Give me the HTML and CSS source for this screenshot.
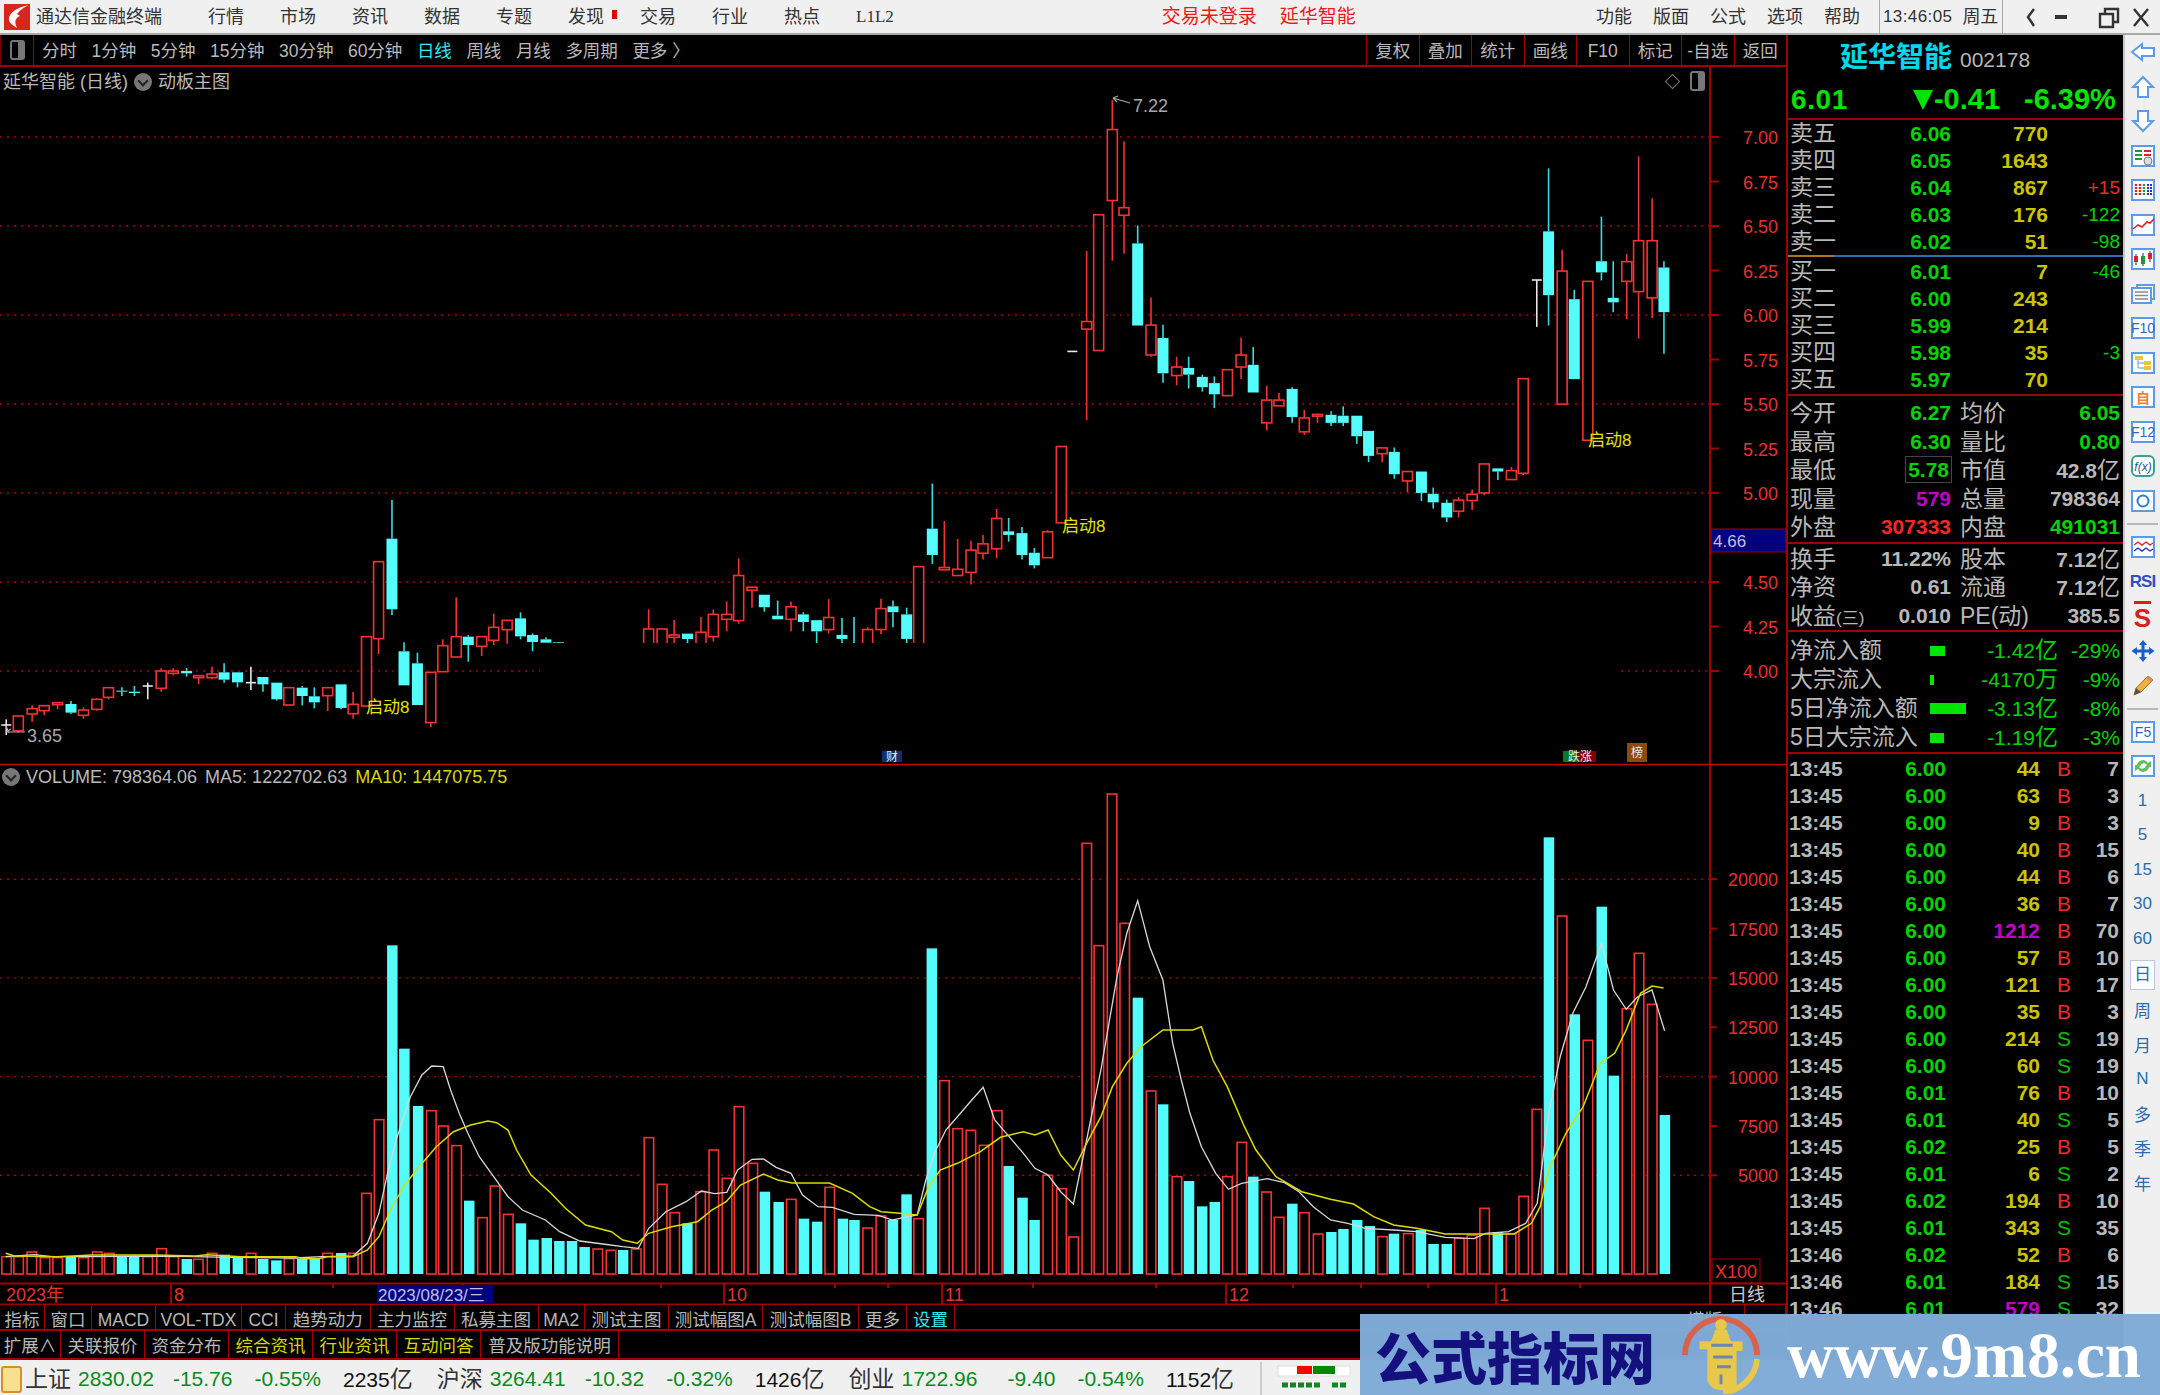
FILE: index.html
```html
<!DOCTYPE html>
<html lang="zh-CN">
<head>
    <meta charset="UTF-8">
    <title>通达信金融终端</title>
    <link rel="stylesheet" href="styles.css">
</head>
<body>
    <div class="titlebar">
        <svg class="logo" viewBox="0 0 26 26"><rect width="26" height="26" fill="#d9261c"/><path d="M25 1 C14 3 6 8 5 14 C4 19 9 21 13 24 C10 18 11 14 16 12 L13 10 C16 6 20 3 25 1Z" fill="#fff"/></svg>
        <span class="app-name">通达信金融终端</span>
        <nav class="menu menu-left">
            <span>行情</span><span>市场</span><span>资讯</span><span>数据</span><span>专题</span>
            <span class="has-dot">发现</span><span>交易</span><span>行业</span><span>热点</span><span class="l1l2">L1L2</span>
        </nav>
        <span class="alert alert-first">交易未登录</span>
        <span class="alert alert-second">延华智能</span>
        <nav class="menu menu-right">
            <span>功能</span><span>版面</span><span>公式</span><span>选项</span><span>帮助</span>
        </nav>
        <div class="clock"><span class="clock-time">13:46:05</span><span>周五</span></div>
        <div class="winctl">
            <svg viewBox="0 0 157 34"><path d="M31 9 L25 17 L31 26" class="wc"/><path d="M52 17 H64" class="wc wc-fat"/><path d="M97 14 H110 V27 H97 Z M102 14 V9 H115 V22 H110" class="wc"/><path d="M131 9 L145 26 M145 9 L131 26" class="wc"/></svg>
        </div>
    </div>

    <div class="workspace">
        <main class="main">
            <div class="periodbar">
                <div class="period-icon"><i></i></div>
                <div class="periods">
                    <span>分时</span><span>1分钟</span><span>5分钟</span><span>15分钟</span><span>30分钟</span><span>60分钟</span>
                    <span class="on">日线</span><span>周线</span><span>月线</span><span>多周期</span><span>更多 〉</span>
                </div>
                <div class="tools">
                    <span>复权</span><span>叠加</span><span>统计</span><span>画线</span><span>F10</span><span>标记</span><span>-自选</span><span>返回</span>
                </div>
            </div>

            <div class="charts">
                <svg id="chart" class="chart" viewBox="0 67 1786 1238"></svg>
                <div class="chart-title">
                    <span>延华智能 (日线)</span><i class="round-btn"></i><span>动板主图</span>
                </div>
                <div class="chart-corner"><i class="diamond"></i><i class="mini-box"></i></div>
                <div class="vol-title">
                    <i class="round-btn"></i><span>VOLUME: 798364.06</span><span>MA5: 1222702.63</span><span class="yel">MA10: 1447075.75</span>
                </div>
            </div>

            <div class="btnrow btnrow-a">
                <span>指标</span><span>窗口</span><span>MACD</span><span>VOL-TDX</span><span>CCI</span><span>趋势动力</span><span>主力监控</span><span>私募主图</span><span>MA2</span><span>测试主图</span><span>测试幅图A</span><span>测试幅图B</span><span>更多</span><span class="cy">设置</span><b></b><span>模版</span><span></span>
            </div>
            <div class="btnrow btnrow-b">
                <span>扩展∧</span><span>关联报价</span><span>资金分布</span><span class="yel">综合资讯</span><span class="yel">行业资讯</span><span class="yel">互动问答</span><span>普及版功能说明</span>
            </div>
        </main>

        <aside class="quote">
            <div class="stock-head"><span class="stock-name">延华智能</span><span class="stock-code">002178</span></div>
            <div class="price-line">
                <span class="last">6.01</span>
                <span class="chg"><i class="tri"></i>-0.41</span>
                <span class="pct">-6.39%</span>
            </div>

            <div class="book">
                <div class="row"><span>卖五</span><b class="g">6.06</b><b class="y">770</b><em></em></div>
                <div class="row"><span>卖四</span><b class="g">6.05</b><b class="y">1643</b><em></em></div>
                <div class="row"><span>卖三</span><b class="g">6.04</b><b class="y">867</b><em class="r">+15</em></div>
                <div class="row"><span>卖二</span><b class="g">6.03</b><b class="y">176</b><em class="g">-122</em></div>
                <div class="row"><span>卖一</span><b class="g">6.02</b><b class="y">51</b><em class="g">-98</em></div>
            </div>
            <div class="book-split"></div>
            <div class="book">
                <div class="row"><span>买一</span><b class="g">6.01</b><b class="y">7</b><em class="g">-46</em></div>
                <div class="row"><span>买二</span><b class="g">6.00</b><b class="y">243</b><em></em></div>
                <div class="row"><span>买三</span><b class="g">5.99</b><b class="y">214</b><em></em></div>
                <div class="row"><span>买四</span><b class="g">5.98</b><b class="y">35</b><em class="g">-3</em></div>
                <div class="row"><span>买五</span><b class="g">5.97</b><b class="y">70</b><em></em></div>
            </div>

            <div class="info info-top">
                <div class="irow"><span>今开</span><b class="g">6.27</b><span>均价</span><b class="g">6.05</b></div>
                <div class="irow"><span>最高</span><b class="g">6.30</b><span>量比</span><b class="g">0.80</b></div>
                <div class="irow"><span>最低</span><b class="g"><u>5.78</u></b><span>市值</span><b>42.8<small>亿</small></b></div>
                <div class="irow"><span>现量</span><b class="m">579</b><span>总量</span><b>798364</b></div>
                <div class="irow"><span>外盘</span><b class="r">307333</b><span>内盘</span><b class="g">491031</b></div>
            </div>
            <div class="info">
                <div class="irow"><span>换手</span><b>11.22%</b><span>股本</span><b>7.12<small>亿</small></b></div>
                <div class="irow"><span>净资</span><b>0.61</b><span>流通</span><b>7.12<small>亿</small></b></div>
                <div class="irow"><span>收益<small>(三)</small></span><b>0.010</b><span>PE(动)</span><b>385.5</b></div>
            </div>
            <div class="flows">
                <div class="frow"><span>净流入额</span><i class="fbar fbar-a"></i><em>-1.42<small>亿</small></em><em>-29%</em></div>
                <div class="frow"><span>大宗流入</span><i class="fbar fbar-b"></i><em>-4170<small>万</small></em><em>-9%</em></div>
                <div class="frow"><span>5日净流入额</span><i class="fbar fbar-c"></i><em>-3.13<small>亿</small></em><em>-8%</em></div>
                <div class="frow"><span>5日大宗流入</span><i class="fbar fbar-d"></i><em>-1.19<small>亿</small></em><em>-3%</em></div>
            </div>

            <div class="ticks">
                <div class="tick"><span>13:45</span><b class="g">6.00</b><b class="y">44</b><b class="r">B</b><span class="n">7</span></div>
                <div class="tick"><span>13:45</span><b class="g">6.00</b><b class="y">63</b><b class="r">B</b><span class="n">3</span></div>
                <div class="tick"><span>13:45</span><b class="g">6.00</b><b class="y">9</b><b class="r">B</b><span class="n">3</span></div>
                <div class="tick"><span>13:45</span><b class="g">6.00</b><b class="y">40</b><b class="r">B</b><span class="n">15</span></div>
                <div class="tick"><span>13:45</span><b class="g">6.00</b><b class="y">44</b><b class="r">B</b><span class="n">6</span></div>
                <div class="tick"><span>13:45</span><b class="g">6.00</b><b class="y">36</b><b class="r">B</b><span class="n">7</span></div>
                <div class="tick"><span>13:45</span><b class="g">6.00</b><b class="m">1212</b><b class="r">B</b><span class="n">70</span></div>
                <div class="tick"><span>13:45</span><b class="g">6.00</b><b class="y">57</b><b class="r">B</b><span class="n">10</span></div>
                <div class="tick"><span>13:45</span><b class="g">6.00</b><b class="y">121</b><b class="r">B</b><span class="n">17</span></div>
                <div class="tick"><span>13:45</span><b class="g">6.00</b><b class="y">35</b><b class="r">B</b><span class="n">3</span></div>
                <div class="tick"><span>13:45</span><b class="g">6.00</b><b class="y">214</b><b class="gs">S</b><span class="n">19</span></div>
                <div class="tick"><span>13:45</span><b class="g">6.00</b><b class="y">60</b><b class="gs">S</b><span class="n">19</span></div>
                <div class="tick"><span>13:45</span><b class="g">6.01</b><b class="y">76</b><b class="r">B</b><span class="n">10</span></div>
                <div class="tick"><span>13:45</span><b class="g">6.01</b><b class="y">40</b><b class="gs">S</b><span class="n">5</span></div>
                <div class="tick"><span>13:45</span><b class="g">6.02</b><b class="y">25</b><b class="r">B</b><span class="n">5</span></div>
                <div class="tick"><span>13:45</span><b class="g">6.01</b><b class="y">6</b><b class="gs">S</b><span class="n">2</span></div>
                <div class="tick"><span>13:45</span><b class="g">6.02</b><b class="y">194</b><b class="r">B</b><span class="n">10</span></div>
                <div class="tick"><span>13:45</span><b class="g">6.01</b><b class="y">343</b><b class="gs">S</b><span class="n">35</span></div>
                <div class="tick"><span>13:46</span><b class="g">6.02</b><b class="y">52</b><b class="r">B</b><span class="n">6</span></div>
                <div class="tick"><span>13:46</span><b class="g">6.01</b><b class="y">184</b><b class="gs">S</b><span class="n">15</span></div>
                <div class="tick"><span>13:46</span><b class="g">6.01</b><b class="m">579</b><b class="gs">S</b><span class="n">32</span></div>
            </div>
        </aside>

        <aside class="side">
            <div class="sbtn"><svg viewBox="0 0 26 24"><path class="arw" d="M2 12 L12 4 V8 H24 V16 H12 V20 Z"/></svg></div>
            <div class="sbtn"><svg viewBox="0 0 26 24"><path class="arw" d="M13 2 L23 12 H18 V22 H8 V12 H3 Z"/></svg></div>
            <div class="sbtn"><svg viewBox="0 0 26 24"><path class="arw" d="M13 22 L23 12 H18 V2 H8 V12 H3 Z"/></svg></div>
            <div class="sbtn"><svg viewBox="0 0 26 24"><rect class="ibox" x="2" y="2" width="22" height="20"/><path d="M5 7 H12 M5 11 H12 M5 15 H12" stroke="#1a9a3a" stroke-width="2"/><path d="M14 7 H21 M14 11 H21" stroke="#e02020" stroke-width="2"/><circle cx="18" cy="17" r="4" fill="#ddd" stroke="#777"/></svg></div>
            <div class="sbtn"><svg viewBox="0 0 26 24"><rect class="ibox" x="2" y="2" width="22" height="20"/><path d="M6 6 V18 M10 6 V18" stroke="#e02020" stroke-width="2.4" stroke-dasharray="2 1"/><path d="M14 6 V18" stroke="#1a9a3a" stroke-width="2.4" stroke-dasharray="2 1"/><path d="M18 6 V18 M21 6 V18" stroke="#2030d0" stroke-width="2" stroke-dasharray="2 1"/></svg></div>
            <div class="sbtn"><svg viewBox="0 0 26 24"><rect class="ibox" x="2" y="2" width="22" height="20"/><path d="M3 16 L8 12 L12 14 L17 9 L20 10 L24 6" fill="none" stroke="#e02020" stroke-width="1.6"/></svg></div>
            <div class="sbtn"><svg viewBox="0 0 26 24"><rect class="ibox" x="2" y="2" width="22" height="20"/><path d="M6 7 V18 M13 6 V19 M20 4 V15" stroke="#333" stroke-width="1"/><rect x="4" y="9" width="4" height="6" fill="#e02020"/><rect x="11" y="9" width="4" height="8" fill="#1a9a3a"/><rect x="18" y="6" width="4" height="6" fill="#e02020"/></svg></div>
            <div class="sbtn"><svg viewBox="0 0 26 24"><rect class="ibox" x="7" y="3" width="17" height="14"/><rect class="ibox" x="2" y="6" width="19" height="15"/><path d="M5 10 H18 M5 13.5 H18 M5 17 H18" stroke="#888" stroke-width="1.6"/></svg></div>
            <div class="sbtn"><svg viewBox="0 0 26 24"><rect class="ibox" x="2" y="2" width="22" height="20"/><text class="itxt" x="13" y="17" text-anchor="middle">F10</text></svg></div>
            <div class="sbtn"><svg viewBox="0 0 26 24"><rect class="ibox" x="2" y="2" width="22" height="20"/><path d="M8 7 V17 H15 M8 12 H15" fill="none" stroke="#5b9bea"/><rect x="5" y="5" width="8" height="4" fill="#f0c040"/><rect x="14" y="10" width="7" height="4" fill="#f0c040"/><rect x="14" y="15" width="7" height="4" fill="#f0c040"/></svg></div>
            <div class="sbtn"><svg viewBox="0 0 26 24"><rect class="ibox" x="2" y="2" width="22" height="20"/><text class="itxt itxt-or" x="13" y="18" text-anchor="middle">自</text></svg></div>
            <div class="sbtn"><svg viewBox="0 0 26 24"><rect class="ibox" x="2" y="2" width="22" height="20"/><text class="itxt" x="13" y="17" text-anchor="middle">F12</text></svg></div>
            <div class="sbtn"><svg viewBox="0 0 26 24"><rect class="ibox ibox-teal" x="2" y="2" width="22" height="20" rx="5"/><text class="itxt itxt-fx" x="13" y="17" text-anchor="middle">f(x)</text></svg></div>
            <div class="sbtn"><svg viewBox="0 0 26 24"><rect class="ibox" x="2" y="2" width="22" height="20"/><circle cx="13" cy="12" r="5.5" fill="none" stroke="#2a80d0" stroke-width="2"/></svg></div>
            <div class="ssep"></div>
            <div class="sbtn"><svg viewBox="0 0 26 24"><rect class="ibox" x="2" y="2" width="22" height="20"/><path d="M4 10 L8 7 L12 10 L16 7 L20 10 L23 8" fill="none" stroke="#e02020" stroke-width="1.4"/><path d="M4 16 L8 13 L12 16 L16 13 L20 16 L23 14" fill="none" stroke="#2030d0" stroke-width="1.4"/></svg></div>
            <div class="sbtn"><span class="rsi">RSI</span></div>
            <div class="sbtn"><span class="dollar">S</span></div>
            <div class="sbtn"><svg viewBox="0 0 26 24"><path d="M13 1 L17 6 H14.5 V10.5 H19 V8 L24.5 12 L19 16 V13.5 H14.5 V18 H17 L13 23 L9 18 H11.5 V13.5 H7 V16 L1.5 12 L7 8 V10.5 H11.5 V6 H9 Z" fill="#1a5ec8"/></svg></div>
            <div class="sbtn"><svg viewBox="0 0 26 24"><path d="M4 22 L6 15 L18 3 L23 7 L11 19 Z" fill="#f0b040" stroke="#a87020"/><path d="M18 3 L23 7 L21 9 L16 5 Z" fill="#e88080"/><path d="M4 22 L6 15 L11 19 Z" fill="#555"/></svg></div>
            <div class="ssep"></div>
            <div class="sbtn"><svg viewBox="0 0 26 24"><rect class="ibox" x="2" y="2" width="22" height="20"/><text class="itxt" x="13" y="17" text-anchor="middle">F5</text></svg></div>
            <div class="sbtn"><svg viewBox="0 0 26 24"><rect class="ibox" x="2" y="2" width="22" height="20"/><path d="M7 11 A6 6 0 0 1 18 9 L21 7 V13 H15 L17 11 A4 4 0 0 0 10 12 Z M19 13 A6 6 0 0 1 8 15 L5 17 V11 H11 L9 13 A4 4 0 0 0 16 12 Z" fill="#60c060"/></svg></div>
            <div class="sbtn sbtn-txt">1</div>
            <div class="sbtn sbtn-txt">5</div>
            <div class="sbtn sbtn-txt">15</div>
            <div class="sbtn sbtn-txt">30</div>
            <div class="sbtn sbtn-txt">60</div>
            <div class="sbtn sbtn-txt sbtn-first sbtn-on"><span>日</span></div>
            <div class="sbtn sbtn-txt">周</div>
            <div class="sbtn sbtn-txt">月</div>
            <div class="sbtn sbtn-txt">N</div>
            <div class="sbtn sbtn-txt">多</div>
            <div class="sbtn sbtn-txt">季</div>
            <div class="sbtn sbtn-txt">年</div>
        </aside>
    </div>

    <footer class="statusbar">
        <i class="status-icon"></i>
        <div class="idx"><span class="nm">上证</span><span class="v">2830.02</span><span class="c">-15.76</span><span class="p">-0.55%</span><span class="a">2235<small>亿</small></span></div>
        <div class="idx"><span class="nm">沪深</span><span class="v">3264.41</span><span class="c">-10.32</span><span class="p">-0.32%</span><span class="a">1426<small>亿</small></span></div>
        <div class="idx"><span class="nm">创业</span><span class="v">1722.96</span><span class="c">-9.40</span><span class="p">-0.54%</span><span class="a">1152<small>亿</small></span></div>
        <div class="status-led">
            <svg viewBox="0 0 100 30"><rect x="6" y="2" width="72" height="10" fill="#fff" stroke="#ddd"/><rect x="25" y="2" width="15" height="8" fill="#f00"/><rect x="41" y="2" width="22" height="8" fill="#080"/><path d="M10 21 H50 M60 21 H75" stroke="#0a8a20" stroke-width="5" stroke-dasharray="6 2"/></svg>
        </div>
    </footer>

    <div class="watermark">
        <span class="wm-cn">公式指标网</span>
        <svg class="wm-logo" viewBox="0 0 80 80">
            <path d="M3 40 A37 37 0 0 1 77 40" fill="none" stroke="#d8624c" stroke-width="6"/>
            <path d="M77 44 A37 37 0 0 1 42 78" fill="none" stroke="#e8c84a" stroke-width="6"/>
            <circle cx="40" cy="9" r="6" fill="#e8c84a"/>
            <path d="M34 14 H46 L50 26 H62 V36 H56 V76 H40 C32 76 28 72 26 66 V34 H18 V26 H30 Z" fill="#e8c84a"/>
            <path d="M30 30 H52 M32 42 H52 M36 52 H50 M40 60 V70" stroke="#6c86b0" stroke-width="3" fill="none"/>
        </svg>
        <span class="wm-url">www.9m8.cn</span>
    </div>

    <script src="chart.js"></script>
</body>
</html>
```
FILE: styles.css
```css
* {
    box-sizing: border-box;
}
html, body {
    margin: 0;
    padding: 0;
}
body {
    position: relative;
    width: 2160px;
    height: 1395px;
    overflow: hidden;
    background: #000;
    color: #b8b8b8;
    font-family: "Liberation Sans", "Noto Sans CJK SC", sans-serif;
    font-size: 18px;
}
i, em, u {
    font-style: normal;
    text-decoration: none;
}

/* title bar */
.titlebar {
    display: flex;
    align-items: center;
    height: 35px;
    background: #f0f0f0;
    border-bottom: 2px solid #a8a8a8;
    color: #333;
    line-height: 30px;
}
.logo {
    width: 26px;
    height: 26px;
    margin-left: 4px;
}
.app-name {
    margin-left: 6px;
    width: 126px;
    white-space: nowrap;
}
.menu {
    display: flex;
}
.menu-left {
    margin-left: 46px;
    gap: 36px;
}
.menu-right {
    margin-left: auto;
    gap: 21px;
}
.has-dot {
    position: relative;
}
.has-dot::after {
    content: "";
    position: absolute;
    left: 44px;
    top: 8px;
    width: 5px;
    height: 9px;
    background: #e00000;
}
.l1l2 {
    font-family: "Liberation Serif", serif;
    font-size: 17px;
}
.alert {
    color: #f01818;
    font-size: 19px;
}
.alert-first {
    margin-left: 268px;
}
.alert-second {
    margin-left: 23px;
}
.clock {
    display: flex;
    align-items: center;
    gap: 10px;
    width: 124px;
    height: 33px;
    margin-left: 19px;
    padding-left: 3px;
    border-left: 1px solid #aaa;
    border-right: 1px solid #aaa;
}
.clock-time {
    font-size: 17px;
    letter-spacing: 0.4px;
    white-space: nowrap;
}
.winctl {
    width: 157px;
    height: 33px;
}
.winctl svg {
    display: block;
    width: 157px;
    height: 34px;
}
.wc {
    fill: none;
    stroke: #333;
    stroke-width: 2.4;
}
.wc-fat {
    stroke-width: 4;
}

/* workspace */
.workspace {
    display: flex;
    height: 1325px;
}
.main {
    display: flex;
    flex-direction: column;
    width: 1786px;
}
.periodbar {
    display: flex;
    height: 32px;
    border-bottom: 2px solid #a00000;
    border-left: 1px solid #800000;
    line-height: 32px;
}
.period-icon {
    display: flex;
    align-items: center;
    justify-content: center;
    width: 33px;
    border-right: 1px solid #a00000;
}
.period-icon i, .mini-box {
    display: block;
    width: 15px;
    height: 20px;
    border: 2px solid #777;
    border-radius: 3px;
    background: linear-gradient(to right, #000 55%, #777 55%);
}
.periods {
    display: flex;
    gap: 14.5px;
    margin-left: 8px;
    font-size: 17.5px;
}
.periods .on {
    color: #30e8f0;
}
.tools {
    display: grid;
    grid-template-columns: repeat(8, 52.5px);
    margin-left: auto;
    text-align: center;
    font-size: 17.5px;
}
.tools span {
    border-left: 1px solid #a00000;
    white-space: nowrap;
}
.charts {
    position: relative;
    height: 1238px;
}
.chart {
    display: block;
    width: 1786px;
    height: 1238px;
}
.chart-title, .vol-title {
    position: absolute;
    left: 3px;
    display: flex;
    align-items: center;
    white-space: nowrap;
    font-size: 18px;
    line-height: 24px;
}
.chart-title {
    top: 3px;
    gap: 6px;
}
.vol-title {
    left: 2px;
    top: 698px;
    gap: 8px;
}
.vol-title .round-btn {
    margin-right: -2px;
}
.round-btn {
    display: block;
    width: 18px;
    height: 18px;
    border-radius: 50%;
    background: #777;
    position: relative;
}
.round-btn::after {
    content: "";
    position: absolute;
    left: 5px;
    top: 4px;
    width: 6px;
    height: 6px;
    border-right: 2px solid #222;
    border-bottom: 2px solid #222;
    transform: rotate(45deg);
}
.chart-corner {
    position: absolute;
    right: 81px;
    top: 4px;
    display: flex;
    align-items: center;
    gap: 12px;
}
.diamond {
    display: block;
    width: 11px;
    height: 11px;
    border: 1px solid #777;
    transform: rotate(45deg);
}
.yel {
    color: #d8d800;
}
.cy {
    color: #30e8f0;
}
.btnrow {
    display: grid;
    border-bottom: 2px solid #a00000;
    text-align: center;
    font-size: 17.5px;
    white-space: nowrap;
    overflow: hidden;
}
.btnrow span {
    border-right: 1px solid #a00000;
    overflow: hidden;
}
.btnrow-a {
    grid-template-columns: 45px 47px 64px 86px 44px 84.5px 84px 84px 46.5px 84px 94px 96px 48px 48px 710px 80px 41px;
    height: 26px;
    line-height: 30px;
}
.btnrow-b {
    grid-template-columns: 61px 84px 84px 84px 84px 84px 138px;
    justify-content: start;
    height: 29px;
    line-height: 31px;
}

/* quote panel */
.quote {
    width: 337px;
    height: 1325px;
    overflow: hidden;
    border-left: 2px solid #a00000;
}
.stock-head {
    display: flex;
    align-items: center;
    height: 46px;
    padding-left: 52px;
    gap: 8px;
}
.stock-name {
    color: #00d8e8;
    font-size: 28px;
    font-weight: bold;
    line-height: 40px;
}
.stock-code {
    font-size: 21px;
    line-height: 40px;
    margin-top: 4px;
}
.price-line {
    display: flex;
    align-items: center;
    height: 39px;
    border-bottom: 2px solid #a00000;
    color: #00e400;
    font-size: 29px;
    font-weight: bold;
}
.last {
    margin-left: 3px;
    font-size: 28px;
    letter-spacing: 0.6px;
}
.chg {
    display: flex;
    align-items: center;
    margin-left: 65px;
}
.tri {
    display: block;
    width: 0;
    height: 0;
    margin-right: 1px;
    border-left: 10px solid transparent;
    border-right: 10px solid transparent;
    border-top: 20px solid #00e400;
}
.pct {
    margin-left: 24px;
}
.g {
    color: #00d400;
}
.y {
    color: #c8c400;
}
.r {
    color: #f02828;
}
.m {
    color: #c000c8;
}
.gs {
    color: #00c000;
}
.book .row {
    display: grid;
    grid-template-columns: 96px 65px 97px 72px;
    height: 27px;
    padding-left: 2px;
    line-height: 27px;
}
.row span, .irow span, .frow span {
    font-size: 23px;
    white-space: nowrap;
}
.row b, .row em, .irow b {
    text-align: right;
    font-size: 21px;
}
.row em {
    font-size: 19px;
}
.book-split {
    height: 2px;
    margin-bottom: 1px;
    background: linear-gradient(to right, #a87820 46px, #2a70b0 46px);
}
.info {
    padding-top: 1px;
    border-top: 2px solid #a00000;
}
.info-top {
    margin-top: 1px;
    padding-top: 3px;
}
.irow {
    display: grid;
    grid-template-columns: 76px 85px 65px 104px;
    height: 28.5px;
    padding-left: 2px;
    line-height: 28px;
}
.irow span:nth-of-type(2) {
    padding-left: 9px;
}
.irow small, .frow small {
    font-size: 23px;
    font-weight: normal;
}
.irow span small {
    font-size: 17px;
}
.irow u {
    padding: 1px 2px;
    outline: 1px solid #444;
}
.flows {
    padding-top: 4px;
    border-top: 2px solid #a00000;
    border-bottom: 2px solid #a00000;
}
.frow {
    display: grid;
    grid-template-columns: 140px 40px 88px 62px;
    align-items: center;
    height: 29px;
    padding-left: 2px;
    line-height: 29px;
    color: #00d400;
}
.frow span {
    color: #b8b8b8;
}
.frow em {
    text-align: right;
    font-size: 21px;
    white-space: nowrap;
}
.fbar {
    display: block;
    height: 10px;
    background: #00e400;
}
.fbar-a { width: 15px; }
.fbar-b { width: 4px; }
.fbar-c { width: 36px; height: 11px; }
.fbar-d { width: 14px; }
.ticks {
    margin-top: 1px;
}
.tick {
    display: grid;
    grid-template-columns: 96px 61px 94px 35px 44px;
    height: 27px;
    padding-left: 1px;
    line-height: 27px;
    font-size: 21px;
    font-weight: bold;
}
.tick b:nth-of-type(1), .tick b:nth-of-type(2), .tick .n {
    text-align: right;
}
.tick b:nth-of-type(3) {
    padding-left: 17px;
    font-weight: normal;
}

/* right side bar */
.side {
    display: flex;
    flex-direction: column;
    width: 37px;
    background: #f0f0f0;
    border-left: 2px solid #c8c8c8;
}
.sbtn {
    display: flex;
    align-items: center;
    justify-content: center;
    flex: none;
    height: 34.5px;
}
.sbtn svg {
    width: 26px;
    height: 24px;
}
.arw {
    fill: #fff;
    stroke: #5b9bea;
    stroke-width: 2;
}
.ibox {
    fill: #fff;
    stroke: #5b9bea;
    stroke-width: 2;
}
.ibox-teal {
    stroke: #3aa090;
}
.itxt {
    fill: #2a68c8;
    font-family: "Liberation Sans", sans-serif;
    font-size: 14px;
}
.itxt-or {
    fill: #f08040;
    font-family: "Noto Sans CJK SC", sans-serif;
    font-weight: bold;
}
.itxt-fx {
    fill: #1a5a90;
    font-size: 12px;
    font-style: italic;
}
.ssep {
    flex: none;
    height: 2px;
    margin: 5px 2px;
    background: #b8b8b8;
}
.rsi {
    color: #3050c0;
    font-size: 17px;
    font-weight: bold;
    letter-spacing: -1px;
}
.dollar {
    color: #d82020;
    font-size: 26px;
    font-weight: bold;
    line-height: 28px;
    border-top: 3px solid #d82020;
}
.sbtn-txt {
    color: #2a6cb0;
    font-size: 17px;
}
.sbtn-first {
    margin-top: 2px;
}
.sbtn-on span {
    padding: 2px 3px;
    background: #fff;
    border: 1px solid #b8c8e0;
    line-height: 24px;
}

/* status bar */
.statusbar {
    display: flex;
    align-items: center;
    height: 35px;
    padding-top: 3px;
    background: #f0f0f0;
    color: #222;
    font-size: 21px;
    line-height: 32px;
    white-space: nowrap;
}
.status-icon {
    display: block;
    width: 21px;
    height: 27px;
    margin-left: 1px;
    border: 2px solid #d89020;
    border-radius: 3px;
    background: #f8e090;
}
.idx {
    display: flex;
}
.idx:first-of-type {
    margin-left: 3px;
}
.idx + .idx {
    margin-left: 24px;
}
.idx .nm {
    margin-right: 7px;
    font-size: 23px;
    color: #333;
}
.idx .v, .idx .c, .idx .p {
    color: #0a8a20;
}
.idx .c {
    min-width: 59px;
    margin-left: 19px;
    text-align: right;
}
.idx .p {
    margin-left: 22px;
}
.idx .a {
    margin-left: 22px;
    color: #111;
}
.idx small {
    font-size: 23px;
    color: #333;
}
.status-led {
    width: 100px;
    height: 35px;
    margin-left: 26px;
    padding-left: 10px;
    border-left: 2px solid #ccc;
}
.status-led svg {
    display: block;
    width: 100px;
    height: 30px;
    margin-top: 2px;
}

/* watermark lying over the corner */
.watermark {
    position: absolute;
    right: 0;
    bottom: 0;
    display: flex;
    align-items: center;
    width: 800px;
    height: 81px;
    background: rgba(127, 171, 216, 0.98);
}
.wm-cn {
    margin-left: 15px;
    color: #14107e;
    font-family: "Noto Sans CJK SC", sans-serif;
    font-size: 56px;
    font-weight: 900;
    line-height: 70px;
    white-space: nowrap;
}
.wm-logo {
    width: 78px;
    height: 78px;
    margin-left: 27px;
}
.wm-url {
    margin-left: 27px;
    color: #fff;
    font-family: "Liberation Serif", serif;
    font-size: 65px;
    font-weight: bold;
    line-height: 70px;
    white-space: nowrap;
}

/* chart svg */
.grid-line {
    stroke: #a00000;
    stroke-width: 1.4;
    stroke-dasharray: 2 5;
}
.axis-line {
    stroke: #a00000;
    stroke-width: 2;
    fill: none;
}
.split-line {
    stroke: #c80000;
    stroke-width: 1.6;
}
.up {
    fill: #000;
    stroke: #f53232;
    stroke-width: 1.6;
}
.up-wick {
    stroke: #f53232;
    stroke-width: 1.6;
}
.down {
    fill: #54fcfc;
    stroke: none;
}
.down-wick {
    stroke: #3ddcdc;
    stroke-width: 1.6;
}
.flat-wick {
    stroke: #e8e8e8;
    stroke-width: 1.6;
}
.ma5 {
    fill: none;
    stroke: #d8d8d8;
    stroke-width: 1.3;
}
.ma10 {
    fill: none;
    stroke: #dcdc00;
    stroke-width: 1.5;
}
.mask {
    fill: #000;
}
.lbl {
    font-family: "Liberation Sans", "Noto Sans CJK SC", sans-serif;
    font-size: 18px;
    dominant-baseline: central;
}
.lbl-axis {
    fill: #e83030;
}
.lbl-gray {
    fill: #a8a8a8;
}
.lbl-start {
    fill: #e4e400;
    font-size: 17px;
}
.lbl-date {
    fill: #c0c0e0;
    font-size: 17px;
}
.lbl-white {
    fill: #c8c8c8;
}
.lbl-tiny {
    fill: #e8e8e8;
    font-size: 12px;
}
.box-navy {
    fill: #000080;
}
.box-navy-line {
    fill: #000080;
    stroke: #a00000;
}
.box-outline {
    fill: none;
    stroke: #a00000;
}
.mark-navy { fill: #103070; }
.mark-green { fill: #0a7a20; }
.mark-red { fill: #800000; }
.mark-brown { fill: #8a4a10; }
.note-line {
    fill: none;
    stroke: #a8a8a8;
    stroke-width: 1.2;
}
```
FILE: chart.js
```js
// draws the kline + volume panels into #chart, coordinates are page pixels
const svg = document.getElementById("chart");
const NS = "http://www.w3.org/2000/svg";

function el(tag, cls, attrs, txt) {
    const node = document.createElementNS(NS, tag);
    if (cls) node.setAttribute("class", cls);
    for (const k in attrs) node.setAttribute(k, attrs[k]);
    if (txt !== undefined) node.textContent = txt;
    svg.appendChild(node);
    return node;
}
function line(cls, x1, y1, x2, y2) {
    el("line", cls, { x1, y1, x2, y2 });
}
function label(cls, x, y, txt, anchor) {
    el("text", "lbl " + cls, { x, y: y + 1, "text-anchor": anchor || "start" }, txt);
}

const PRICE_Y = p => 137 + (7 - p) * 178;
const VOL_Y = v => 1274 - v * 0.01974;
const CHART_RIGHT = 1710;

// grid
[7, 6.5, 6, 5.5, 5, 4.5].forEach(p => line("grid-line", 0, PRICE_Y(p), CHART_RIGHT, PRICE_Y(p)));
line("grid-line", 0, PRICE_Y(4), 540, PRICE_Y(4));
line("grid-line", 1621, PRICE_Y(4), CHART_RIGHT, PRICE_Y(4));
[20000, 15000, 10000, 5000].forEach(v => line("grid-line", 0, VOL_Y(v), CHART_RIGHT, VOL_Y(v)));

// candles: [x, high, top, bottom, low, type], sampled in segments
function drawCandles(rows, ox, sx, oy, sy) {
    rows.forEach(r => {
        const x = ox + r[0] / sx;
        const Y = v => oy + v / sy;
        const type = r[5];
        const top = Y(r[2]), bot = Y(r[3]);
        const high = r[1] === null ? top : Y(r[1]);
        const low = r[4] === null ? bot : Y(r[4]);
        const wick = type === "r" ? "up-wick" : type === "c" ? "down-wick" : "flat-wick";
        if (high < top) line(wick, x, high, x, top);
        if (low > bot) line(wick, x, bot, x, low);
        if (type === "r") el("rect", "up", { x: x - 5, y: top, width: 10, height: bot - top });
        else if (type === "c") el("rect", "down", { x: x - 5.5, y: top, width: 11, height: bot - top });
        else line(wick, x - 5, top, x + 5, top);
    });
}

drawCandles([
    [14, 838, 855, 855, 885, "w"], [41, null, 828, 872, 878, "r"], [72, 796, 806, 822, 845, "r"],
    [99, null, 797, 812, 826, "r"], [129, null, 788, 794, 808, "r"], [159, 783, 792, 818, 822, "c"],
    [187, 802, 810, 826, 836, "r"], [217, 775, 778, 808, 812, "r"], [243, null, 743, 772, 778, "r"],
    [273, 742, 752, 755, 768, "c"], [301, 738, 755, 759, 768, "c"], [331, 728, 738, 738, 778, "w"],
    [361, 685, 693, 745, 755, "r"], [388, 685, 693, 700, 706, "r"], [418, 684, 693, 700, 710, "c"],
    [445, null, 707, 713, 732, "r"], [475, 680, 702, 713, 718, "r"], [502, 670, 697, 719, 728, "c"],
    [532, null, 697, 727, 742, "c"], [562, 680, 728, 728, 750, "w"], [589, null, 711, 733, 755, "c"],
    [620, null, 728, 778, 782, "c"], [647, null, 743, 795, null, "r"], [677, 738, 743, 768, 796, "c"],
    [704, 742, 769, 787, 805, "c"], [734, null, 743, 767, 813, "r"], [764, null, 733, 804, 808, "c"],
    [791, 756, 793, 821, 836, "r"], [821, null, 590, 798, null, "r"], [848, null, 365, 596, 642, "r"],
    [878, 180, 296, 508, 525, "c"], [905, 607, 634, 736, null, "c"], [935, 638, 670, 795, null, "c"],
    [965, null, 697, 848, 862, "r"], [992, 598, 617, 695, null, "r"], [1022, 472, 590, 651, null, "r"],
    [1049, 585, 590, 615, 665, "c"], [1079, null, 590, 619, 648, "r"], [1106, 521, 562, 601, 615, "r"],
    [1136, null, 541, 569, 611, "r"], [1166, 517, 535, 589, 598, "c"], [1193, 580, 585, 606, 634, "c"],
    [1223, 592, 598, 608, 612, "c"], [1251, null, 607, 612, null, "c"], [1453, 508, 567, 640, null, "r"],
    [1483, null, 567, 640, null, "r"], [1510, 540, 585, 592, 610, "r"], [1540, null, 581, 597, 612, "c"]
], 0, 2.24, 440, 3);

drawCandles([
    [3, 1203, 1237, 1290, null, "r"], [40, 1186, 1197, 1247, 1258, "r"], [80, 1168, 1197, 1208, 1235, "r"],
    [116, 1072, 1110, 1211, 1218, "r"], [156, null, 1136, 1143, 1182, "r"], [193, null, 1153, 1181, 1191, "c"],
    [233, 1166, 1200, 1208, null, "c"], [273, 1168, 1180, 1208, 1235, "r"], [310, 1192, 1197, 1214, 1235, "c"],
    [350, null, 1210, 1235, 1262, "c"], [386, 1163, 1204, 1231, 1240, "r"], [426, 1205, 1243, 1252, 1262, "c"],
    [462, 1203, 1280, 1290, null, "c"], [503, 1226, 1231, 1290, null, "r"], [543, 1162, 1184, 1231, 1241, "r"],
    [579, 1166, 1179, 1192, 1226, "c"], [620, 1182, 1197, 1252, 1290, "c"], [656, null, 1090, 1290, null, "r"],
    [697, 904, 1005, 1064, 1084, "c"], [733, 988, 1092, 1097, null, "r"], [773, 1028, 1096, 1110, null, "r"],
    [813, 1032, 1053, 1103, 1130, "r"], [849, 1019, 1039, 1060, 1074, "r"], [890, 961, 982, 1050, 1071, "r"],
    [926, 981, 1011, 1019, 1034, "c"], [966, 1001, 1015, 1064, 1074, "c"], [1003, 1048, 1059, 1087, 1094, "c"],
    [1043, 1008, 1012, 1070, null, "r"], [1084, null, 821, 992, null, "r"], [1117, null, 608, 608, null, "w"],
    [1160, 383, 541, 558, 762, "r"], [1196, null, 302, 606, null, "r"], [1237, 45, 111, 270, 405, "r"],
    [1272, 137, 286, 303, 389, "r"], [1313, 326, 366, 550, null, "c"], [1353, 487, 549, 616, 620, "r"],
    [1389, 548, 578, 657, 678, "c"], [1430, 620, 643, 662, 684, "r"], [1466, 620, 645, 660, 691, "c"],
    [1507, 660, 665, 688, 698, "c"], [1543, 664, 679, 704, 735, "c"]
], 700, 3, 80, 2.24);

drawCandles([
    [21, null, 649, 707, null, "r"], [59, 577, 616, 643, 670, "r"], [93, 598, 638, 700, null, "c"],
    [131, 685, 717, 768, 785, "r"], [165, 701, 717, 730, null, "r"], [202, 688, 692, 755, 768, "c"],
    [236, 739, 757, 788, 795, "r"], [273, null, 749, 753, 768, "r"], [311, 742, 750, 768, 775, "c"],
    [345, 731, 752, 768, 775, "c"], [383, null, 752, 798, 815, "c"], [416, null, 786, 842, 856, "c"],
    [454, null, 824, 837, 856, "r"], [488, 823, 833, 883, 893, "c"], [525, null, 877, 898, 923, "r"],
    [564, null, 877, 925, 943, "c"], [597, 913, 927, 946, 960, "c"], [635, 940, 947, 980, 990, "c"],
    [668, 934, 941, 966, 980, "r"], [706, 917, 928, 942, 963, "r"], [740, null, 860, 925, 930, "r"],
    [778, null, 870, 877, 896, "c"], [816, 867, 875, 895, null, "r"], [849, null, 669, 881, 885, "r"],
    [887, null, 448, 448, 553, "w"], [920, 198, 339, 482, 550, "c"], [958, 380, 428, 726, null, "r"],
    [992, 470, 491, 670, null, "c"], [1030, null, 451, 807, null, "r"], [1068, 306, 406, 431, 449, "c"],
    [1101, 406, 488, 498, 520, "c"], [1139, 390, 407, 451, 536, "r"], [1172, 171, 360, 474, 579, "r"],
    [1210, 265, 360, 488, 533, "r"], [1243, 406, 420, 520, 613, "c"]
], 1220, 2.8, 80, 2.24);

// start labels, one of them half covered by the mask below
label("lbl-start", 366, 706, "启动8");
label("lbl-start", 1062, 525, "启动8");
label("lbl-start", 1588, 439, "启动8");
label("lbl-start", 921, 651, "启动8");

// this part of the lower chart is blanked in the capture
el("rect", "mask", { x: 540, y: 643, width: 1080, height: 105 });

// low/high notes
el("path", "note-line", { d: "M6 726 L9 733 M6 732 H25 M6 732 L11 729" });
label("lbl-gray", 27, 735, "3.65");
el("path", "note-line", { d: "M1113 98 L1130 103 M1113 98 L1118 96 M1113 98 L1117 102" });
label("lbl-gray", 1133, 105, "7.22");

// marks at the bottom of the price panel
el("rect", "mark-navy", { x: 882, y: 751, width: 20, height: 11 });
label("lbl-tiny", 892, 756, "财", "middle");
el("rect", "mark-green", { x: 1563, y: 751, width: 14, height: 11 });
el("rect", "mark-red", { x: 1577, y: 751, width: 19, height: 11 });
label("lbl-tiny", 1580, 756, "跌涨", "middle");
el("rect", "mark-brown", { x: 1627, y: 743, width: 20, height: 19 });
label("lbl-tiny", 1637, 752, "榜", "middle");

// volume bars: [x, top, type]
function drawBars(rows, ox) {
    rows.forEach(r => {
        const x = ox + r[0] / 1.742;
        const top = 780 + r[1] / 3;
        if (r[2] === "r") el("rect", "up", { x: x - 4.5, y: top, width: 9.5, height: 1274 - top });
        else el("rect", "down", { x: x - 5, y: top, width: 10.5, height: 1274 - top });
    });
}
function bars(str) {
    return str.trim().split(/\s+/).map(s => {
        const p = s.split(",");
        return [+p[0], +p[1], p[2]];
    });
}
drawBars(bars(`11,1430,r 32,1430,r 55,1416,r 78,1433,r 100,1433,r 123,1430,c 145,1433,r 169,1416,r 190,1420,r
    212,1430,c 233,1430,c 257,1430,r 281,1406,r 302,1430,r 325,1437,c 345,1438,r 369,1420,r 391,1424,c 414,1434,c
    437,1420,r 458,1437,c 481,1441,c 503,1436,r 526,1436,c 548,1436,c 570,1420,r 594,1419,c 615,1420,r 638,1240,r
    660,1019,r 683,496,c 704,806,c 728,978,c 751,992,r 772,1038,r 795,1097,r 817,1262,c 840,1313,r 862,1218,r
    885,1303,r 907,1330,c 929,1379,c 952,1374,c 974,1383,c 996,1383,c 1018,1401,c 1041,1407,r 1064,1411,r 1085,1410,c
    1108,1407,r 1130,1073,r 1153,1213,r 1175,1298,r 1197,1330,c 1220,1235,r 1243,1110,r 1266,1195,r 1287,980,r
    1311,1150,r 1332,1235,c 1356,1266,c 1378,1258,r 1400,1316,c 1423,1325,c 1445,1222,r 1468,1316,c 1488,1320,c
    1511,1344,r 1534,1308,r 1555,1320,c`), 0);
drawBars(bars(`11,1243,c 32,1316,r 55,505,c 77,902,r 100,1046,r 123,1051,r 146,1096,r 169,992,r 189,1158,c 213,1253,c
    234,1320,c 257,1186,r 281,1226,r 302,1371,r 325,190,r 346,497,r 369,42,r 391,430,r 414,653,c 437,933,r 458,973,c
    482,1190,r 503,1203,c 526,1279,c 548,1266,c 570,1190,r 595,1087,r 615,1190,c 638,1236,r 660,1312,r 683,1271,c
    704,1298,r 728,1362,r 751,1356,c 772,1347,c 796,1320,c 818,1338,c 840,1370,r 860,1361,c 885,1361,r 907,1350,c
    929,1392,c 952,1392,c 974,1375,r 996,1366,r 1018,1285,r 1041,1356,c 1064,1361,r 1086,1249,r 1109,988,r 1130,172,c
    1153,408,r 1175,703,c 1198,781,r 1222,380,c 1243,887,c 1266,686,r 1287,520,r 1310,673,r 1332,1005,c`), 900);

// moving averages
function path(ptsA, ptsB) {
    const a = ptsA.map(p => (p[0] / 1.742).toFixed(1) + "," + (780 + p[1] / 3).toFixed(1));
    const b = ptsB.map(p => (900 + p[0] / 1.742).toFixed(1) + "," + (780 + p[1] / 3).toFixed(1));
    return a.concat(b).join(" ");
}
el("polyline", "ma5", { points: path(
    [[10,1430],[60,1424],[90,1430],[160,1430],[270,1428],[340,1430],[400,1432],[515,1434],[560,1430],[615,1428],[640,1390],[660,1300],[675,1180],[690,1080],[715,950],[735,885],[752,858],[772,860],[785,930],[800,1000],[815,1060],[835,1130],[860,1190],[885,1250],[910,1290],[950,1320],[975,1355],[1010,1383],[1050,1392],[1085,1400],[1112,1405],[1130,1345],[1160,1295],[1195,1265],[1222,1233],[1245,1241],[1266,1237],[1285,1170],[1310,1138],[1330,1137],[1352,1162],[1378,1180],[1398,1245],[1425,1280],[1450,1282],[1488,1303],[1530,1306],[1555,1320],[1568,1315]],
    [[30,1305],[45,1200],[60,1120],[80,1050],[100,1010],[125,960],[145,922],[165,1020],[190,1070],[215,1120],[235,1165],[258,1185],[280,1235],[302,1272],[325,1080],[350,870],[378,590],[395,460],[414,362],[435,500],[458,600],[475,790],[490,900],[505,1000],[525,1100],[550,1180],[572,1228],[595,1210],[640,1196],[670,1208],[695,1235],[720,1280],[750,1320],[780,1330],[810,1345],[860,1350],[900,1355],[950,1372],[1000,1376],[1020,1360],[1060,1355],[1090,1330],[1110,1270],[1130,1000],[1150,830],[1172,700],[1195,620],[1222,490],[1243,630],[1265,688],[1285,650],[1310,630],[1332,752]]
) });
el("polyline", "ma10", { points: path(
    [[10,1420],[25,1428],[100,1430],[160,1425],[270,1425],[340,1428],[360,1424],[420,1430],[515,1430],[530,1436],[555,1436],[570,1430],[615,1430],[640,1410],[660,1370],[680,1290],[705,1215],[730,1160],[760,1100],[790,1055],[820,1035],[850,1023],[865,1028],[885,1050],[900,1110],[925,1185],[960,1240],[985,1285],[1020,1335],[1065,1355],[1085,1380],[1110,1390],[1130,1360],[1170,1340],[1215,1325],[1240,1290],[1265,1265],[1290,1215],[1330,1182],[1355,1200],[1380,1209],[1445,1209],[1485,1240],[1515,1280],[1535,1295],[1568,1300]],
    [[30,1305],[50,1220],[70,1170],[100,1150],[140,1115],[175,1072],[215,1055],[235,1065],[258,1050],[280,1125],[302,1170],[325,1090],[350,1010],[370,920],[395,850],[420,800],[458,750],[510,750],[525,740],[545,840],[570,920],[600,1040],[620,1110],[655,1190],[700,1235],[750,1258],[790,1272],[825,1310],[860,1335],[900,1345],[950,1362],[1070,1362],[1100,1330],[1115,1280],[1130,1170],[1160,1060],[1190,980],[1220,850],[1245,820],[1265,750],[1290,640],[1310,618],[1330,624]]
) });

// axes
line("axis-line", CHART_RIGHT, 67, CHART_RIGHT, 1305);
line("split-line", 0, 764.5, 1786, 764.5);
line("axis-line", 0, 1283.5, 1786, 1283.5);
line("axis-line", 0, 1304.5, 1786, 1304.5);

[7, 6.75, 6.5, 6.25, 6, 5.75, 5.5, 5.25, 5, 4.5, 4.25, 4].forEach(p => {
    const y = PRICE_Y(p);
    line("axis-line", CHART_RIGHT, y, CHART_RIGHT + 9, y);
    label("lbl-axis", 1778, y, p.toFixed(2), "end");
});
el("rect", "box-navy-line", { x: 1711, y: 529, width: 75, height: 23 });
label("lbl-date", 1713, 540, "4.66");

[20000, 17500, 15000, 12500, 10000, 7500, 5000].forEach(v => {
    const y = VOL_Y(v);
    line("axis-line", CHART_RIGHT, y, CHART_RIGHT + 7, y);
    label("lbl-axis", 1778, y, String(v), "end");
});
el("rect", "box-outline", { x: 1712, y: 1259, width: 48, height: 24 });
label("lbl-axis", 1715, 1271, "X100");

// date axis
[171, 724, 942, 1226, 1496].forEach(x => line("axis-line", x, 1284, x, 1304));
[333, 463, 661, 835, 888, 1033, 1156, 1293, 1361, 1428, 1580].forEach(x => line("axis-line", x, 1284, x, 1288));
label("lbl-axis", 6, 1294, "2023年");
label("lbl-axis", 174, 1294, "8");
label("lbl-axis", 727, 1294, "10");
label("lbl-axis", 945, 1294, "11");
label("lbl-axis", 1229, 1294, "12");
label("lbl-axis", 1499, 1294, "1");
el("rect", "box-navy", { x: 377, y: 1285, width: 116, height: 19 });
label("lbl-date", 378, 1294, "2023/08/23/三");
label("lbl-white", 1729, 1294, "日线");
```
